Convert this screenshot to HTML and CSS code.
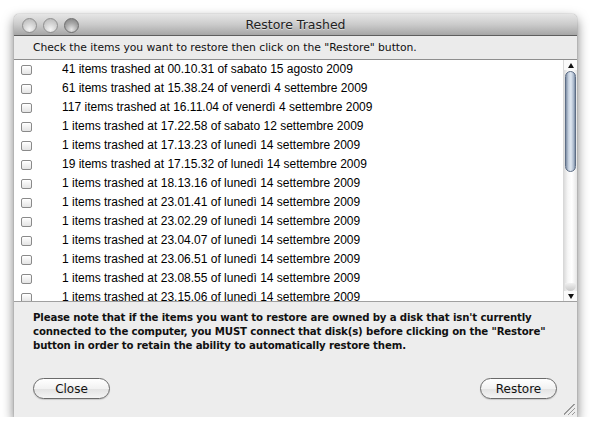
FILE: index.html
```html
<!DOCTYPE html>
<html>
<head>
<meta charset="utf-8">
<link rel="stylesheet" href="styles.css">
</head>
<body>
<div class="window">
  <div class="titlebar">
    <div class="lights">
      <span class="light"></span>
      <span class="light"></span>
      <span class="light dark"></span>
    </div>
    <div class="title">Restore Trashed</div>
  </div>
  <div class="instructions">Check the items you want to restore then click on the "Restore" button.</div>
  <div class="list">
    <div class="rows">
      <div class="row"><span class="cb"></span><span class="txt">41 items trashed at 00.10.31 of sabato 15 agosto 2009</span></div>
      <div class="row"><span class="cb"></span><span class="txt">61 items trashed at 15.38.24 of venerdì 4 settembre 2009</span></div>
      <div class="row"><span class="cb"></span><span class="txt">117 items trashed at 16.11.04 of venerdì 4 settembre 2009</span></div>
      <div class="row"><span class="cb"></span><span class="txt">1 items trashed at 17.22.58 of sabato 12 settembre 2009</span></div>
      <div class="row"><span class="cb"></span><span class="txt">1 items trashed at 17.13.23 of lunedì 14 settembre 2009</span></div>
      <div class="row"><span class="cb"></span><span class="txt">19 items trashed at 17.15.32 of lunedì 14 settembre 2009</span></div>
      <div class="row"><span class="cb"></span><span class="txt">1 items trashed at 18.13.16 of lunedì 14 settembre 2009</span></div>
      <div class="row"><span class="cb"></span><span class="txt">1 items trashed at 23.01.41 of lunedì 14 settembre 2009</span></div>
      <div class="row"><span class="cb"></span><span class="txt">1 items trashed at 23.02.29 of lunedì 14 settembre 2009</span></div>
      <div class="row"><span class="cb"></span><span class="txt">1 items trashed at 23.04.07 of lunedì 14 settembre 2009</span></div>
      <div class="row"><span class="cb"></span><span class="txt">1 items trashed at 23.06.51 of lunedì 14 settembre 2009</span></div>
      <div class="row"><span class="cb"></span><span class="txt">1 items trashed at 23.08.55 of lunedì 14 settembre 2009</span></div>
      <div class="row"><span class="cb"></span><span class="txt">1 items trashed at 23.15.06 of lunedì 14 settembre 2009</span></div>
    </div>
    <div class="scrollbar">
      <div class="arrow up"></div>
      <div class="track">
        <div class="thumb"></div>
        <div class="trackend"></div>
      </div>
      <div class="arrow down"></div>
    </div>
  </div>
  <div class="footer">
    <p class="note">Please note that if the items you want to restore are owned by a disk that isn't currently<br>connected to the computer, you MUST connect that disk(s) before clicking on the "Restore"<br>button in order to retain the ability to automatically restore them.</p>
    <div class="buttons">
      <button class="btn">Close</button>
      <button class="btn">Restore</button>
    </div>
    <div class="grip"></div>
  </div>
</div>
</body>
</html>
```

FILE: styles.css
```css
html, body {
  margin: 0;
  padding: 0;
  background: #ffffff;
}
body {
  padding: 14px 0 0 14px;
  font-family: "DejaVu Sans", sans-serif;
}
.window {
  width: 563px;
  height: 403px;
  background: #ededed;
  border-radius: 5px 5px 0 0;
  box-shadow: 0 5px 12px rgba(0,0,0,0.55), 0 0 1px rgba(0,0,0,0.5);
  display: flex;
  flex-direction: column;
  overflow: hidden;
  position: relative;
}
.titlebar {
  height: 21px;
  border-bottom: 1px solid #5e5e5e;
  background: linear-gradient(#e6e6e6, #cbcbcb 50%, #a6a6a6);
  position: relative;
  display: flex;
  align-items: center;
  justify-content: center;
}
.lights {
  position: absolute;
  left: 8px;
  top: 4px;
  display: flex;
  gap: 6px;
}
.light {
  width: 13px;
  height: 13px;
  border-radius: 50%;
  border: 1px solid #8f8f8f;
  box-sizing: content-box;
  background: radial-gradient(circle at 50% 80%, #f4f4f4 0%, #d6d6d6 45%, #b3b3b3 100%);
}
.light.dark {
  border-color: #6f6f6f;
  background: radial-gradient(circle at 50% 80%, #e6e6e6 0%, #a9a9a9 50%, #7c7c7c 100%);
}
.title {
  font-size: 12.5px;
  color: #222;
  text-shadow: 0 1px 0 rgba(255,255,255,0.5);
}
.instructions {
  height: 23px;
  border-bottom: 1px solid #8e8e8e;
  font-size: 10.8px;
  letter-spacing: -0.05px;
  color: #111;
  padding-left: 19px;
  display: flex;
  align-items: center;
  background: #ebebeb;
}
.list {
  height: 241px;
  border-bottom: 1px solid #a0a0a0;
  background: #fff;
  display: flex;
  overflow: hidden;
}
.rows {
  flex: 1;
  overflow: hidden;
  margin-top: -1px;
}
.row {
  height: 19px;
  display: flex;
  align-items: center;
  font-family: "Liberation Sans", Arial, sans-serif;
  font-size: 12px;
  color: #000;
}
.cb {
  width: 9px;
  height: 8px;
  margin-left: 7px;
  margin-top: 2px;
  border: 1px solid #8a8a8a;
  border-radius: 2px;
  background: linear-gradient(#ffffff, #e4e4e4);
  box-shadow: inset 0 1px 0 #fff;
}
.txt {
  margin-left: 30px;
}
.scrollbar {
  width: 13px;
  border-left: 1px solid #d8d8d8;
  background: linear-gradient(90deg, #dcdcdc, #f6f6f6 30%, #ffffff 60%, #e6e6e6);
  display: flex;
  flex-direction: column;
}
.arrow {
  height: 10px;
  position: relative;
  background: #fafafa;
}
.arrow::after {
  content: "";
  position: absolute;
  left: 4px;
  width: 0;
  height: 0;
  border-left: 3px solid transparent;
  border-right: 3px solid transparent;
}
.arrow.up::after {
  top: 3px;
  border-bottom: 5px solid #111;
}
.arrow.down::after {
  top: 3px;
  border-top: 5px solid #111;
}
.track {
  flex: 1;
  display: flex;
  flex-direction: column;
  padding-top: 1px;
}
.thumb {
  height: 99px;
  margin: 0 1px;
  border: 1px solid #5d6d85;
  border-radius: 6px;
  background: linear-gradient(90deg, #7f8fa6, #c9d4e2 30%, #dfe7f1 55%, #a9b7ca 85%, #7a8aa1);
}
.trackend {
  margin-top: auto;
  height: 8px;
  border-radius: 0 0 6px 6px;
  background: linear-gradient(#f0f0f0, #c9c9c9);
  margin-left: 1px;
  margin-right: 1px;
}
.footer {
  flex: 1;
  position: relative;
  display: flex;
  flex-direction: column;
  padding: 9px 10px 18px 19px;
}
.note {
  margin: 0;
  font-size: 10.2px;
  letter-spacing: -0.15px;
  font-weight: bold;
  line-height: 14px;
  color: #111;
  white-space: nowrap;
}
.buttons {
  margin-top: auto;
  margin-right: 10px;
  display: flex;
  justify-content: space-between;
}
.btn {
  width: 77px;
  height: 21px;
  border-radius: 11px;
  border: 1px solid #6a6a6a;
  background: linear-gradient(#ffffff, #f2f2f2 50%, #e2e2e2 51%, #f4f4f4);
  font-family: "DejaVu Sans", sans-serif;
  font-size: 12px;
  color: #111;
  padding: 0;
  box-shadow: 0 1px 1px rgba(0,0,0,0.15);
}
.grip {
  position: absolute;
  right: 2px;
  bottom: 2px;
  width: 11px;
  height: 11px;
  background: linear-gradient(135deg, transparent 45%, #999 45%, #999 52%, transparent 52%, transparent 64%, #999 64%, #999 71%, transparent 71%, transparent 83%, #999 83%, #999 90%, transparent 90%);
}
```
